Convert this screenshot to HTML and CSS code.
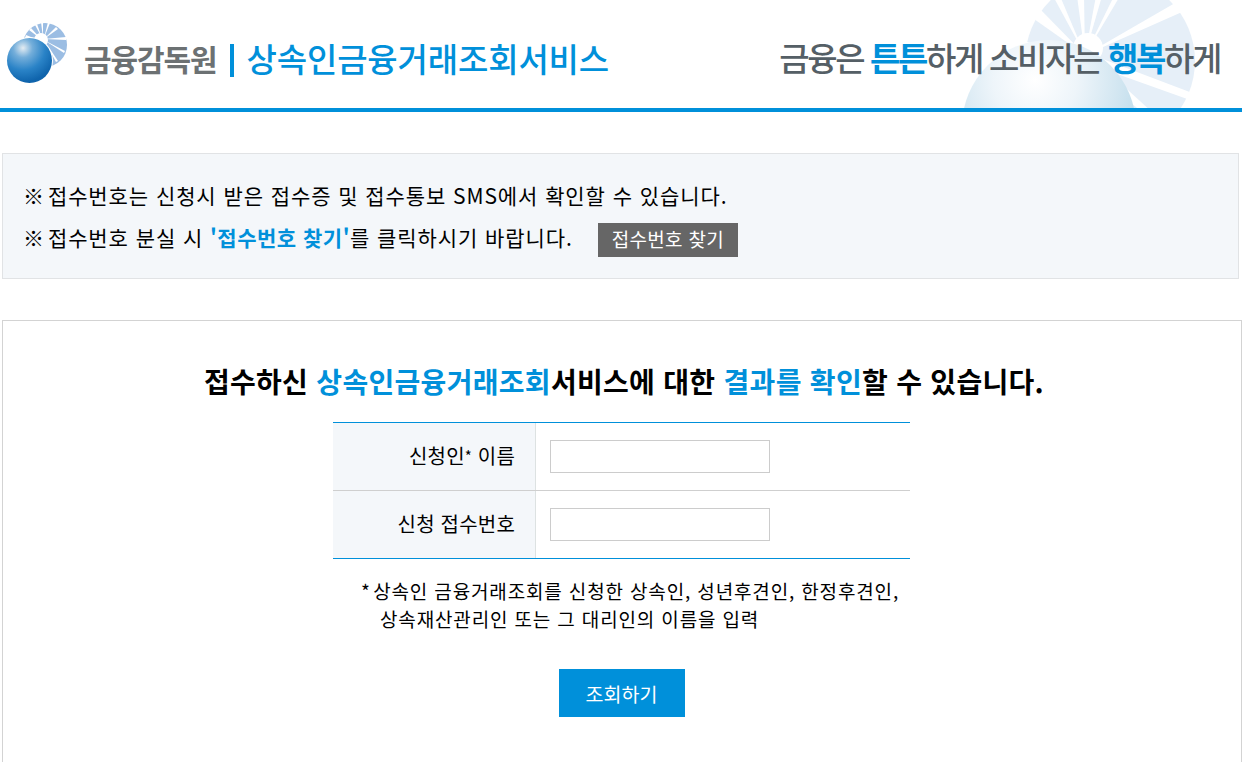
FILE: index.html
```html
<!DOCTYPE html>
<html lang="ko">
<head>
<meta charset="utf-8">
<title>상속인금융거래조회서비스</title>
<link rel="stylesheet" href="styles.css">
</head>
<body>
<header class="header">
  <svg class="sunburst" width="290" height="108" viewBox="950 0 290 108" aria-hidden="true">
    <defs>
      <radialGradient id="bigBall" gradientUnits="userSpaceOnUse" cx="1035" cy="80" r="105">
        <stop offset="0" stop-color="#ffffff"/>
        <stop offset="0.4" stop-color="#eef5fa"/>
        <stop offset="0.8" stop-color="#d2e6f1"/>
        <stop offset="1" stop-color="#c2deec"/>
      </radialGradient>
    </defs>
    <circle cx="1110" cy="61" r="85" fill="#e6eff8"/>
    <g fill="#fff">
      <path d="M1085 55L1000 36L1000 100L1100 100Z"/>
      <path d="M1085 55L1040 9L1034 19Z"/>
      <path d="M1085 55L1060 -4L1053 -4Z"/>
      <path d="M1085 55L1084 -4L1077 -4Z"/>
      <path d="M1085 55L1102 -4L1096 -4Z"/>
      <path d="M1085 55L1120 -4L1114 -4Z"/>
      <path d="M1085 55L1182 12L1175 3Z"/>
      <path d="M1092 55L1195 94L1190 100L1092 65Z"/>
      <path d="M1095 60L1152 112L1142 112L1090 70Z"/>
      <circle cx="1088" cy="48" r="15"/>
    </g>
    <circle cx="1049" cy="127" r="87" fill="url(#bigBall)"/>
  </svg>
  <div class="brand">
    <svg class="logo" width="64" height="64" viewBox="0 0 64 64" aria-hidden="true">
      <defs>
        <radialGradient id="ball" gradientUnits="userSpaceOnUse" cx="17" cy="26" r="34">
          <stop offset="0" stop-color="#e4ecf2"/>
          <stop offset="0.28" stop-color="#74aeda"/>
          <stop offset="0.65" stop-color="#2a83c7"/>
          <stop offset="1" stop-color="#0f64ac"/>
        </radialGradient>
      </defs>
      <circle cx="39" cy="23" r="22" fill="#9bbde3"/>
      <g fill="#fff">
        <path d="M35 19L20 13L19 16Z"/>
        <path d="M35 17L25 6L23 8Z"/>
        <path d="M36 16L31 2L29 3Z"/>
        <path d="M37 16L37 0L35 0Z"/>
        <path d="M38 16L44 1L42 0Z"/>
        <path d="M38 17L52 7L50 5Z"/>
        <path d="M38 17L60 15L60 18Z"/>
        <path d="M38 18L58 31L59 29Z"/>
        <path d="M38 18L50 40L52 39Z"/>
        <circle cx="35" cy="18" r="7"/>
      </g>
      <circle cx="23.5" cy="38.5" r="23.5" fill="#fff"/>
      <circle cx="23.5" cy="38.5" r="22.5" fill="url(#ball)"/>
    </svg>
    <span class="fss">금융감독원</span>
    <span class="divider"></span>
    <span class="service">상속인금융거래조회서비스</span>
  </div>
  <p class="slogan">금융은 <b>튼튼</b>하게 소비자는 <b>행복</b>하게</p>
</header>

<section class="notice">
  <p class="notice-line"><span class="mark">※ </span>접수번호는 신청시 받은 접수증 및 접수통보 SMS에서 확인할 수 있습니다.</p>
  <p class="notice-line"><span class="mark">※ </span>접수번호 분실 시 <strong class="accent tight">'접수번호 찾기'</strong>를 클릭하시기 바랍니다.<a class="find-btn" href="#">접수번호 찾기</a></p>
</section>

<main class="panel">
  <h1 class="title">접수하신 <span class="accent">상속인금융거래조회</span>서비스에 대한 <span class="accent">결과를 확인</span>할 수 있습니다.</h1>
  <form class="form">
    <div class="row">
      <label class="label" for="name">신청인<span class="star">*</span>&nbsp;이름</label>
      <div class="field"><input class="input" id="name" type="text"></div>
    </div>
    <div class="row">
      <label class="label" for="num">신청 접수번호</label>
      <div class="field"><input class="input" id="num" type="text"></div>
    </div>
  </form>
  <p class="hint"><span class="hint-star">* </span>상속인 금융거래조회를 신청한 상속인, 성년후견인, 한정후견인,<br><span class="hint-indent">상속재산관리인 또는 그 대리인의 이름을 입력</span></p>
  <div class="actions"><button class="submit" type="button">조회하기</button></div>
</main>
</body>
</html>
```

FILE: styles.css
```css
* { box-sizing: border-box; }
html, body { margin: 0; height: 762px; overflow: hidden; }
body {
  background: #fff;
  color: #000;
  font-family: "Noto Sans CJK KR", "Noto Sans", sans-serif;
}
p, h1 { margin: 0; }

.header {
  position: relative;
  height: 112px;
  border-bottom: 4px solid #0090da;
  display: flex;
  align-items: center;
  justify-content: space-between;
  padding: 8px 22px 0 6px;
  overflow: hidden;
}
.sunburst { position: absolute; right: 2px; top: 0; }
.brand { position: relative; display: flex; align-items: center; }
.logo { margin-top: -8px; }
.fss { margin-left: 14px; font-size: 30px; font-weight: 700; color: #6c7173; letter-spacing: -1.1px; }
.divider { display: block; width: 4px; height: 33px; margin: 4px 0 0 13px; background: #0090da; }
.service { margin-left: 13px; font-size: 33px; font-weight: 500; color: #0090da; letter-spacing: -0.15px; }
.slogan { position: relative; margin-top: -2px; font-size: 33px; font-weight: 500; color: #555f66; letter-spacing: -2.35px; }
.slogan b { font-weight: 700; color: #0090da; }

.notice {
  margin: 41px 3px 0 2px;
  height: 126px;
  padding: 20px 20px 0;
  background: #f4f7fa;
  border: 1px solid #e1e3e5;
}
.notice-line { font-size: 21px; line-height: 42px; letter-spacing: 0.92px; white-space: nowrap; }
.mark { letter-spacing: -1px; }
.accent { color: #0090da; }
.tight { letter-spacing: 0.5px; }
.find-btn {
  display: inline-block;
  margin-left: 25px;
  padding: 0 14px;
  height: 34px;
  line-height: 32px;
  background: #666;
  color: #fff;
  font-size: 19px;
  letter-spacing: 0.3px;
  text-decoration: none;
  vertical-align: middle;
}

.panel {
  margin: 41px 0 0 2px;
  height: 460px;
  padding: 38px 0 0 4px;
  border: 1px solid #d3d3d3;
  border-bottom: 0;
}
.title { text-align: center; font-size: 28px; line-height: 44px; font-weight: 700; letter-spacing: 0.3px; }
.form {
  width: 577px;
  margin: 19px 0 0 326px;
  border-top: 1px solid #0090da;
  border-bottom: 1px solid #0090da;
}
.row { display: flex; height: 67px; }
.row + .row { height: 68px; border-top: 1px solid #cfcfcf; }
.label {
  width: 203px;
  padding: 0 20px 2px 0;
  display: flex;
  align-items: center;
  justify-content: flex-end;
  background: #f4f7fa;
  border-right: 1px solid #dde2e2;
  font-size: 20px;
  letter-spacing: 0.2px;
}
.star { font-size: 15px; }
.field { flex: 1; display: flex; align-items: center; padding-left: 14px; }
.input { width: 220px; height: 33px; border: 1px solid #cccccc; background: #fff; }
.hint { margin: 18px 0 0 354px; font-size: 19px; line-height: 28px; letter-spacing: 0.85px; white-space: nowrap; }
.hint-star { letter-spacing: -1px; }
.hint-indent { margin-left: 19px; }
.actions { margin: 36px 0 0 -4px; display: flex; justify-content: center; padding-right: 1px; }
.submit {
  width: 126px;
  height: 48px;
  border: 0;
  background: #0090da;
  color: #fff;
  font-family: inherit;
  font-size: 19.5px;
  letter-spacing: 0;
}
```
